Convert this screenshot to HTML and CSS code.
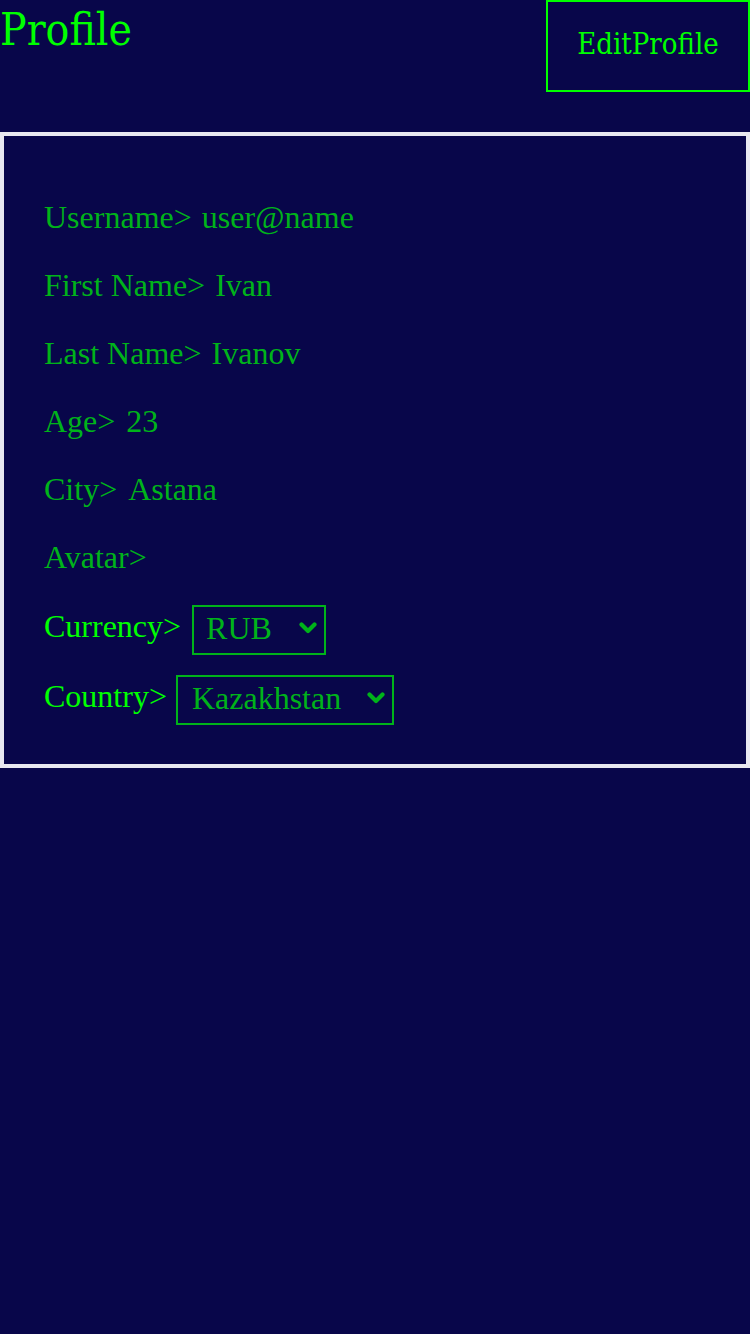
FILE: index.html
```html
<!DOCTYPE html>
<html>
<head>
<meta charset="utf-8">
<link rel="stylesheet" href="styles.css">
</head>
<body>
<header class="header">
  <h1 class="title">Profile</h1>
  <button class="edit-btn">EditProfile</button>
</header>
<section class="panel">
  <p class="field">Username&gt; <span class="value">user@name</span></p>
  <p class="field">First Name&gt; <span class="value">Ivan</span></p>
  <p class="field">Last Name&gt; <span class="value">Ivanov</span></p>
  <p class="field">Age&gt; <span class="value value-wide">23</span></p>
  <p class="field">City&gt; <span class="value value-wide">Astana</span></p>
  <p class="field field-last">Avatar&gt;</p>
  <div class="select-row">
    <label class="select-label">Currency&gt;</label>
    <div class="select-wrap">
      <select class="select currency">
        <option>RUB</option>
      </select>
      <svg class="chevron" width="18" height="12" viewBox="0 0 18 12"><path d="M2.5 2.5 L9 9 L15.5 2.5" fill="none" stroke="#00b31a" stroke-width="4.2" stroke-linecap="round" stroke-linejoin="round"/></svg>
    </div>
  </div>
  <div class="select-row select-row-tight">
    <label class="select-label">Country&gt;</label>
    <div class="select-wrap">
      <select class="select country">
        <option>Kazakhstan</option>
      </select>
      <svg class="chevron" width="18" height="12" viewBox="0 0 18 12"><path d="M2.5 2.5 L9 9 L15.5 2.5" fill="none" stroke="#00b31a" stroke-width="4.2" stroke-linecap="round" stroke-linejoin="round"/></svg>
    </div>
  </div>
</section>
</body>
</html>
```

FILE: styles.css
```css
html, body {
  margin: 0;
  padding: 0;
  background: #08064a;
}
body {
  font-family: "Liberation Serif", serif;
  min-height: 1334px;
}
.header {
  display: flex;
  justify-content: space-between;
  align-items: flex-start;
  height: 132px;
}
.title {
  margin: 4px 0 0;
  font-family: "DejaVu Serif Condensed", "DejaVu Serif", serif;
  font-stretch: condensed;
  font-weight: normal;
  font-size: 44px;
  color: #00ff00;
  line-height: 1.2;
}
.edit-btn {
  box-sizing: border-box;
  width: 204px;
  height: 92px;
  background: transparent;
  border: 2px solid #00ff00;
  color: #00ff00;
  font-family: "DejaVu Serif Condensed", "DejaVu Serif", serif;
  font-stretch: condensed;
  font-size: 29px;
  padding: 0 0 4px;
}
.panel {
  border: 4px solid #e8e8f0;
  padding: 31px 40px 40px;
  height: 636px;
  box-sizing: border-box;
}
.field {
  margin: 32px 0;
  font-size: 32px;
  line-height: 36px;
  color: #00b31a;
}
.value {
  margin-left: 2px;
}
.value-wide {
  margin-left: 3px;
}
.field-last {
  margin-bottom: 30px;
}
.select-row {
  display: flex;
  align-items: flex-start;
  gap: 11px;
  height: 50px;
}
.select-row + .select-row {
  margin-top: 20px;
}
.select-row-tight {
  gap: 9px;
}
.select-label {
  margin-top: 3px;
  font-size: 32px;
  color: #00ff00;
}
.select-wrap {
  position: relative;
}
.select {
  display: block;
  box-sizing: border-box;
  -webkit-appearance: none;
  appearance: none;
  font-family: "Liberation Serif", serif;
  font-size: 32px;
  line-height: 36px;
  color: #00b31a;
  background: transparent;
  border: 2px solid #00b31a;
  height: 50px;
  padding: 3px 30px 7px 12px;
  border-radius: 0;
}
.chevron {
  position: absolute;
  right: 9px;
  top: 17px;
  pointer-events: none;
}
.currency { width: 134px; }
.country { width: 218px; padding-left: 14px; }
```
